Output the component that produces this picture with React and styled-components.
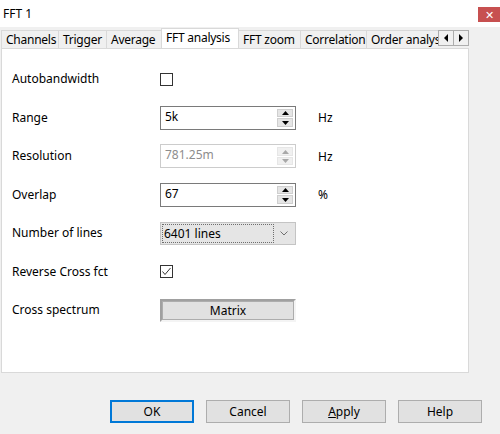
import React from 'react'
import styled, { createGlobalStyle } from 'styled-components'

const GlobalStyle = createGlobalStyle`
  html, body {
    margin: 0;
    padding: 0;
    background: #f0f0f0;
  }
  body {
    font-family: 'Noto Sans', 'Liberation Sans', sans-serif;
    font-size: 12px;
    color: #000;
  }
`

const Dialog = styled.div`
  width: 500px;
  height: 434px;
  background: #f0f0f0;
  display: flex;
  flex-direction: column;
  overflow: hidden;
`

const TitleBar = styled.div`
  height: 27px;
  background: #fff;
  display: flex;
  align-items: center;
  justify-content: space-between;
  padding-left: 3px;
  box-sizing: border-box;
  font-size: 12px;
`

const CloseButton = styled.div`
  width: 22px;
  height: 15px;
  margin-top: 1px;
  background: #c75050;
  color: #fff;
  display: flex;
  align-items: center;
  justify-content: center;
  font-size: 11px;
  line-height: 1;
`

const Body = styled.div`
  padding-left: 1px;
  width: 468px;
`

const TabStrip = styled.div`
  display: flex;
  align-items: flex-end;
  height: 21px;
  position: relative;
  z-index: 1;
`

const Tabs = styled.div`
  display: flex;
  align-items: flex-end;
  width: 436px;
  overflow: hidden;
  padding-left: 1px;
`

const Tab = styled.div`
  flex: 0 0 auto;
  box-sizing: border-box;
  width: ${(p) => p.$width}px;
  height: ${(p) => (p.$active ? 21 : 18)}px;
  margin-bottom: ${(p) => (p.$active ? -1 : 0)}px;
  margin-left: -1px;
  border: 1px solid #d9d9d9;
  border-bottom: none;
  background: ${(p) => (p.$active ? '#fff' : '#f0f0f0')};
  display: flex;
  align-items: ${(p) => (p.$active ? 'flex-start' : 'center')};
  padding: ${(p) => (p.$active ? '1px 0 0 4px' : '0 0 0 4px')};
  white-space: nowrap;
  overflow: hidden;
  line-height: 16px;
  letter-spacing: -0.25px;
  ${(p) => p.$active && 'z-index: 2;'}
`

const Scroller = styled.div`
  display: flex;
  margin-bottom: 2px;
`

const ScrollButton = styled.div`
  width: 16px;
  height: 16px;
  box-sizing: border-box;
  border: 1px solid #adadad;
  margin-left: ${(p) => (p.$first ? 0 : -1)}px;
  background: #f0f0f0;
  display: flex;
  align-items: center;
  justify-content: center;
`

const Panel = styled.div`
  height: 325px;
  box-sizing: border-box;
  background: #fff;
  border: 1px solid #d9d9d9;
  padding: 11px 0 0 10px;
`

const Form = styled.div`
  display: grid;
  grid-template-columns: 148px 136px 22px auto;
  grid-auto-rows: 38.5px;
  align-items: center;
`

const Label = styled.div`
  grid-column: 1;
  line-height: 16px;
`

const Unit = styled.div`
  grid-column: 4;
`

const CheckBox = styled.div`
  grid-column: 2;
  width: 13px;
  height: 13px;
  box-sizing: border-box;
  border: 1px solid #333;
  background: #fff;
  display: flex;
  align-items: center;
  justify-content: center;
`

const SpinBox = styled.div`
  grid-column: 2;
  height: 24px;
  box-sizing: border-box;
  border: 1px solid ${(p) => (p.$disabled ? '#cccccc' : '#7a7a7a')};
  background: #fff;
  display: flex;
  color: ${(p) => (p.$disabled ? '#8d8d8d' : '#000')};
`

const SpinText = styled.div`
  flex: 1;
  padding: 2px 0 0 4px;
  line-height: 16px;
`

const Stepper = styled.div`
  width: 16px;
  margin: 2px 2px 2px 0;
  display: flex;
  flex-direction: column;
  gap: 1px;
`

const StepButton = styled.div`
  flex: 1;
  background: ${(p) => (p.$disabled ? '#f0f0f0' : '#e5e5e5')};
  border: 1px solid ${(p) => (p.$disabled ? '#e6e6e6' : '#cfcfcf')};
  display: flex;
  align-items: center;
  justify-content: center;
`

const Combo = styled.div`
  grid-column: 2;
  height: 23px;
  box-sizing: border-box;
  border: 1px solid #c4c4c4;
  background: #e5e5e5;
  display: flex;
  align-items: center;
  padding: 1px;
`

const FocusText = styled.div`
  flex: 1;
  height: 100%;
  box-sizing: border-box;
  border: 1px dotted #6e6e6e;
  display: flex;
  align-items: center;
  padding-left: 1px;
`

const Chevron = styled.div`
  width: 20px;
  display: flex;
  justify-content: center;
`

const PushedButton = styled.div`
  grid-column: 2;
  height: 23px;
  box-sizing: border-box;
  border: 2px solid;
  border-color: #a0a0a0 #f4f4f4 #f4f4f4 #a0a0a0;
  background: #e1e1e1;
  box-shadow: inset 0 0 0 1px #adadad;
  display: flex;
  align-items: center;
  justify-content: center;
`

const Footer = styled.div`
  display: flex;
  justify-content: flex-end;
  gap: 12px;
  padding-right: 18px;
  margin-top: 27px;
`

const Button = styled.div`
  width: 84px;
  height: 23px;
  box-sizing: border-box;
  background: #e1e1e1;
  border: 1px solid ${(p) => (p.$default ? '#0078d7' : '#adadad')};
  box-shadow: ${(p) => (p.$default ? 'inset 0 0 0 1px #0078d7' : 'none')};
  display: flex;
  align-items: center;
  justify-content: center;
`

const Triangle = ({ dir, color = '#000' }) => {
  const pts = {
    up: '0,4 3.5,0 7,4',
    down: '0,0 3.5,4 7,0',
    left: '4,0 0,4 4,8',
    right: '0,0 4,4 0,8',
  }[dir]
  const horiz = dir === 'left' || dir === 'right'
  return (
    <svg width={horiz ? 4 : 7} height={horiz ? 8 : 4} viewBox={horiz ? '0 0 4 8' : '0 0 7 4'}>
      <polygon points={pts} fill={color} />
    </svg>
  )
}

const Spin = ({ value, disabled }) => (
  <SpinBox $disabled={disabled}>
    <SpinText>{value}</SpinText>
    <Stepper>
      <StepButton $disabled={disabled}>
        <Triangle dir="up" color={disabled ? '#a8a8a8' : '#000'} />
      </StepButton>
      <StepButton $disabled={disabled}>
        <Triangle dir="down" color={disabled ? '#a8a8a8' : '#000'} />
      </StepButton>
    </Stepper>
  </SpinBox>
)

const tabs = [
  ['Channels', 58],
  ['Trigger', 49],
  ['Average', 56],
  ['FFT analysis', 78],
  ['FFT zoom', 63],
  ['Correlation', 67],
  ['Order analysis', 90],
]

export default function App() {
  return (
    <Dialog>
      <GlobalStyle />
      <TitleBar>
        <span>FFT 1</span>
        <CloseButton>✕</CloseButton>
      </TitleBar>
      <Body>
        <TabStrip>
          <Tabs>
            {tabs.map(([name, w]) => (
              <Tab key={name} $width={w} $active={name === 'FFT analysis'}>
                {name}
              </Tab>
            ))}
          </Tabs>
          <Scroller>
            <ScrollButton $first>
              <Triangle dir="left" />
            </ScrollButton>
            <ScrollButton>
              <Triangle dir="right" />
            </ScrollButton>
          </Scroller>
        </TabStrip>
        <Panel>
          <Form>
            <Label>Autobandwidth</Label>
            <CheckBox />

            <Label>Range</Label>
            <Spin value="5k" />
            <Unit>Hz</Unit>

            <Label>Resolution</Label>
            <Spin value="781.25m" disabled />
            <Unit>Hz</Unit>

            <Label>Overlap</Label>
            <Spin value="67" />
            <Unit>%</Unit>

            <Label>Number of lines</Label>
            <Combo>
              <FocusText>6401 lines</FocusText>
              <Chevron>
                <svg width="8" height="5" viewBox="0 0 8 5">
                  <polyline points="0.5,0.5 4,4 7.5,0.5" fill="none" stroke="#707070" strokeWidth="1" />
                </svg>
              </Chevron>
            </Combo>

            <Label>Reverse Cross fct</Label>
            <CheckBox>
              <svg width="11" height="11" viewBox="0 0 11 11">
                <polyline points="1.5,5.5 4,8.5 9.5,2" fill="none" stroke="#333" strokeWidth="1" />
              </svg>
            </CheckBox>

            <Label>Cross spectrum</Label>
            <PushedButton>Matrix</PushedButton>
          </Form>
        </Panel>
      </Body>
      <Footer>
        <Button $default>OK</Button>
        <Button>Cancel</Button>
        <Button>
          <span>
            <u>A</u>pply
          </span>
        </Button>
        <Button>Help</Button>
      </Footer>
    </Dialog>
  )
}
